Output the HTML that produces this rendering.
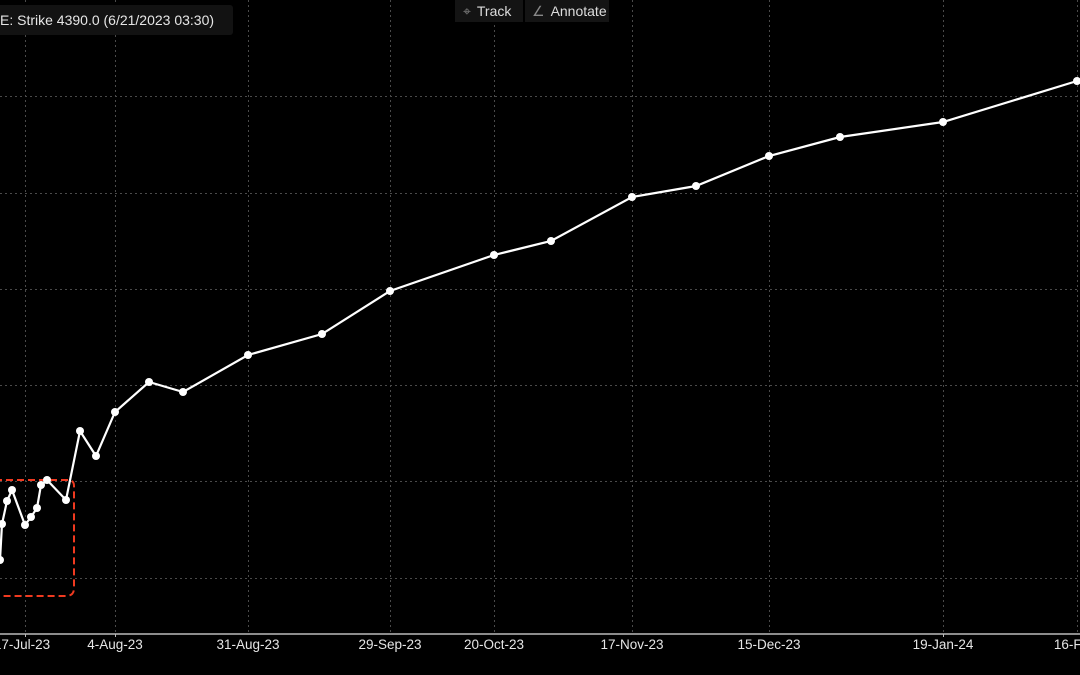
<!DOCTYPE html>
<html><head><meta charset="utf-8"><style>
html,body{margin:0;padding:0;background:#000;width:1080px;height:675px;overflow:hidden;font-family:"Liberation Sans",sans-serif}
.lbl{position:absolute;top:637px;color:#e6e6e6;font-size:13.5px;transform:translateX(-50%);white-space:nowrap}
</style></head><body>
<svg width="1080" height="675" style="position:absolute;left:0;top:0">
<g stroke="#4a4a4a" stroke-width="1" stroke-dasharray="2,3">
<line x1="0" x2="1080" y1="96.5" y2="96.5"/><line x1="0" x2="1080" y1="193.5" y2="193.5"/>
<line x1="0" x2="1080" y1="289.5" y2="289.5"/><line x1="0" x2="1080" y1="385.5" y2="385.5"/>
<line x1="0" x2="1080" y1="481.5" y2="481.5"/><line x1="0" x2="1080" y1="578.5" y2="578.5"/>
<line x1="25.5" x2="25.5" y1="0" y2="634"/><line x1="115.5" x2="115.5" y1="0" y2="634"/>
<line x1="248.5" x2="248.5" y1="0" y2="634"/><line x1="390.5" x2="390.5" y1="0" y2="634"/>
<line x1="494.5" x2="494.5" y1="0" y2="634"/><line x1="632.5" x2="632.5" y1="0" y2="634"/>
<line x1="769.5" x2="769.5" y1="0" y2="634"/><line x1="943.5" x2="943.5" y1="0" y2="634"/>
<line x1="1077.5" x2="1077.5" y1="0" y2="634"/>
</g>
<line x1="0" x2="1080" y1="634" y2="634" stroke="#bbb" stroke-width="1.5"/>
<g stroke="#bbb"><line x1="25.5" x2="25.5" y1="634" y2="637"/><line x1="115.5" x2="115.5" y1="634" y2="637"/><line x1="943.5" x2="943.5" y1="634" y2="637"/></g>
<path d="M-5 480 H68 Q74 480 74 486 V588 Q74 596 66 596 H-5" fill="none" stroke="#f03a20" stroke-width="2" stroke-dasharray="7,4"/>
<polyline fill="none" stroke="#fff" stroke-width="2.2" points="0,560 2,524 7,501 12,490 25,525 31,517 37,508 41,485 47,480 66,500 80,431 96,456 115,412 149,382 183,392 248,355 322,334 390,291 494,255 551,241 632,197 696,186 769,156 840,137 943,122 1077,81"/>
<g fill="#fff">
<circle cx="0" cy="560" r="4"/><circle cx="2" cy="524" r="4"/><circle cx="7" cy="501" r="4"/><circle cx="12" cy="490" r="4"/><circle cx="25" cy="525" r="4"/><circle cx="31" cy="517" r="4"/><circle cx="37" cy="508" r="4"/><circle cx="41" cy="485" r="4"/><circle cx="47" cy="480" r="4"/><circle cx="66" cy="500" r="4"/><circle cx="80" cy="431" r="4"/><circle cx="96" cy="456" r="4"/><circle cx="115" cy="412" r="4"/><circle cx="149" cy="382" r="4"/><circle cx="183" cy="392" r="4"/><circle cx="248" cy="355" r="4"/><circle cx="322" cy="334" r="4"/><circle cx="390" cy="291" r="4"/><circle cx="494" cy="255" r="4"/><circle cx="551" cy="241" r="4"/><circle cx="632" cy="197" r="4"/><circle cx="696" cy="186" r="4"/><circle cx="769" cy="156" r="4"/><circle cx="840" cy="137" r="4"/><circle cx="943" cy="122" r="4"/><circle cx="1077" cy="81" r="4"/>
</g>
</svg>
<div style="position:absolute;left:0;top:5px;width:233px;height:30px;background:#121212;border-radius:0 3px 3px 0;color:#e6e6e6;font-size:14px;line-height:30px">E: Strike 4390.0 (6/21/2023 03:30)</div>
<div style="position:absolute;left:455px;top:0;width:68px;height:22px;background:#141414;color:#ddd;font-size:14px;line-height:22px"><span style="color:#888;margin:0 6px 0 8px">⌖</span>Track</div>
<div style="position:absolute;left:525px;top:0;width:84px;height:22px;background:#141414;color:#ddd;font-size:14px;line-height:22px"><span style="color:#888;margin:0 6px 0 7px">∠</span>Annotate</div>
<div class="lbl" style="left:22px">17-Jul-23</div>
<div class="lbl" style="left:115px">4-Aug-23</div>
<div class="lbl" style="left:248px">31-Aug-23</div>
<div class="lbl" style="left:390px">29-Sep-23</div>
<div class="lbl" style="left:494px">20-Oct-23</div>
<div class="lbl" style="left:632px">17-Nov-23</div>
<div class="lbl" style="left:769px">15-Dec-23</div>
<div class="lbl" style="left:943px">19-Jan-24</div>
<div class="lbl" style="left:1085px">16-Feb-24</div>
</body></html>
